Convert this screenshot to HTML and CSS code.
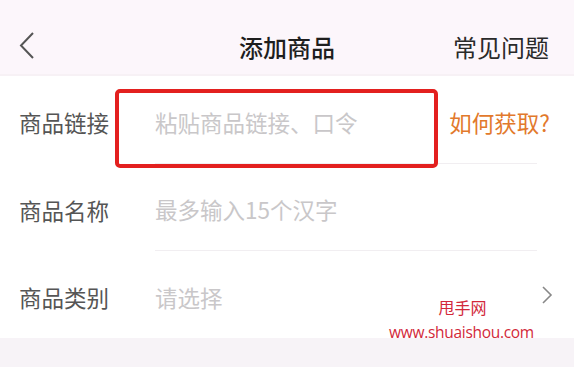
FILE: index.html
```html
<!DOCTYPE html>
<html lang="zh-CN">
<head>
    <meta charset="UTF-8">
    <meta name="viewport" content="width=device-width, initial-scale=1.0">
    <title>添加商品</title>
    <link rel="stylesheet" href="styles.css">
</head>
<body>
    <div class="page">
        <!-- 顶部导航 -->
        <header class="nav">
            <span class="nav-back">
                <svg width="18" height="28" viewBox="0 0 18 28"><path d="M15 1 L3 13.5 L15 26" fill="none" stroke="#555" stroke-width="2"/></svg>
            </span>
            <h1 class="nav-title">添加商品</h1>
            <span class="nav-link">常见问题</span>
        </header>

        <!-- 表单 -->
        <form class="form">
            <div class="row">
                <label class="row-label">商品链接</label>
                <div class="row-field">
                    <input class="row-input" type="text" placeholder="粘贴商品链接、口令">
                    <span class="row-help">如何获取?</span>
                </div>
            </div>
            <div class="row">
                <label class="row-label">商品名称</label>
                <div class="row-field">
                    <input class="row-input" type="text" placeholder="最多输入15个汉字">
                </div>
            </div>
            <div class="row row-last">
                <label class="row-label">商品类别</label>
                <div class="row-field">
                    <span class="row-select">请选择</span>
                    <svg class="row-arrow" width="12" height="20" viewBox="0 0 12 20"><path d="M2 2 L10 10 L2 18" fill="none" stroke="#888" stroke-width="1.6"/></svg>
                </div>
            </div>
        </form>

        <div class="footer"></div>

        <!-- 标注框和水印 -->
        <div class="mark"></div>
        <div class="watermark">
            <span class="watermark-name">甩手网</span>
            <span class="watermark-url">www.shuaishou.com</span>
        </div>
    </div>
</body>
</html>
```

FILE: styles.css
```css
body {
    margin: 0;
    background-color: #fff;
    font-family: "Noto Sans CJK SC", "Noto Sans", sans-serif;
}

.page {
    position: relative;
    width: 574px;
    height: 367px;
    overflow: hidden;
}

.nav {
    display: flex;
    align-items: center;
    justify-content: space-between;
    height: 56px;
    padding: 18px 24px 0 18px;
    background-color: #fcf6fb;
    border-bottom: 2px solid #f7f1f5;
    position: relative;
}

.nav-back {
    display: flex;
    align-items: center;
    width: 30px;
    height: 30px;
}

.nav-title {
    position: absolute;
    left: 0;
    right: 0;
    top: 18px;
    bottom: 0;
    margin: 0;
    display: flex;
    align-items: center;
    justify-content: center;
    font-size: 24px;
    font-weight: 500;
    color: #1e1e1e;
    pointer-events: none;
}

.nav-link {
    font-size: 24px;
    color: #2a2a2a;
    margin-right: 1px;
}

.form {
    margin: 0;
}

.row {
    display: flex;
    align-items: stretch;
    height: 87px;
    padding-left: 19px;
}

.row:first-child {
    height: 88px;
}

.row-label {
    width: 136px;
    flex: none;
    display: flex;
    align-items: center;
    padding-top: 4px;
    font-size: 22.5px;
    color: #555;
}

.row-field {
    flex: 1;
    display: flex;
    align-items: center;
    padding-top: 4px;
    margin-right: 37px;
    border-bottom: 1px solid #f1eef1;
}

.row-last .row-field {
    border-bottom: none;
    margin-right: 21px;
}

.row-input {
    flex: 1;
    min-width: 0;
    border: none;
    outline: none;
    padding: 0;
    background: transparent;
    font-family: inherit;
    font-size: 22.5px;
    color: #333;
}

.row-input::placeholder {
    color: #c9c7c9;
}

.row-help {
    font-size: 22.5px;
    color: #e2792c;
    margin-right: -13px;
}

.row-select {
    flex: 1;
    font-size: 22.5px;
    color: #c9c7c9;
}

.row-arrow {
    margin-top: -4px;
}

.footer {
    height: 30px;
    background-color: #f7f3f7;
}

.mark {
    position: absolute;
    left: 115px;
    top: 89px;
    width: 315px;
    height: 71px;
    border: 4px solid #e3201f;
    border-radius: 5px;
}

.watermark {
    position: absolute;
    left: 389px;
    top: 295px;
    width: 145px;
    display: flex;
    flex-direction: column;
    align-items: center;
    color: #d2283a;
    line-height: 25px;
}

.watermark-name {
    font-size: 16px;
    margin-left: 2px;
}

.watermark-url {
    font-family: "Open Sans", "Liberation Sans", sans-serif;
    font-size: 15.5px;
    letter-spacing: -0.3px;
}
```
